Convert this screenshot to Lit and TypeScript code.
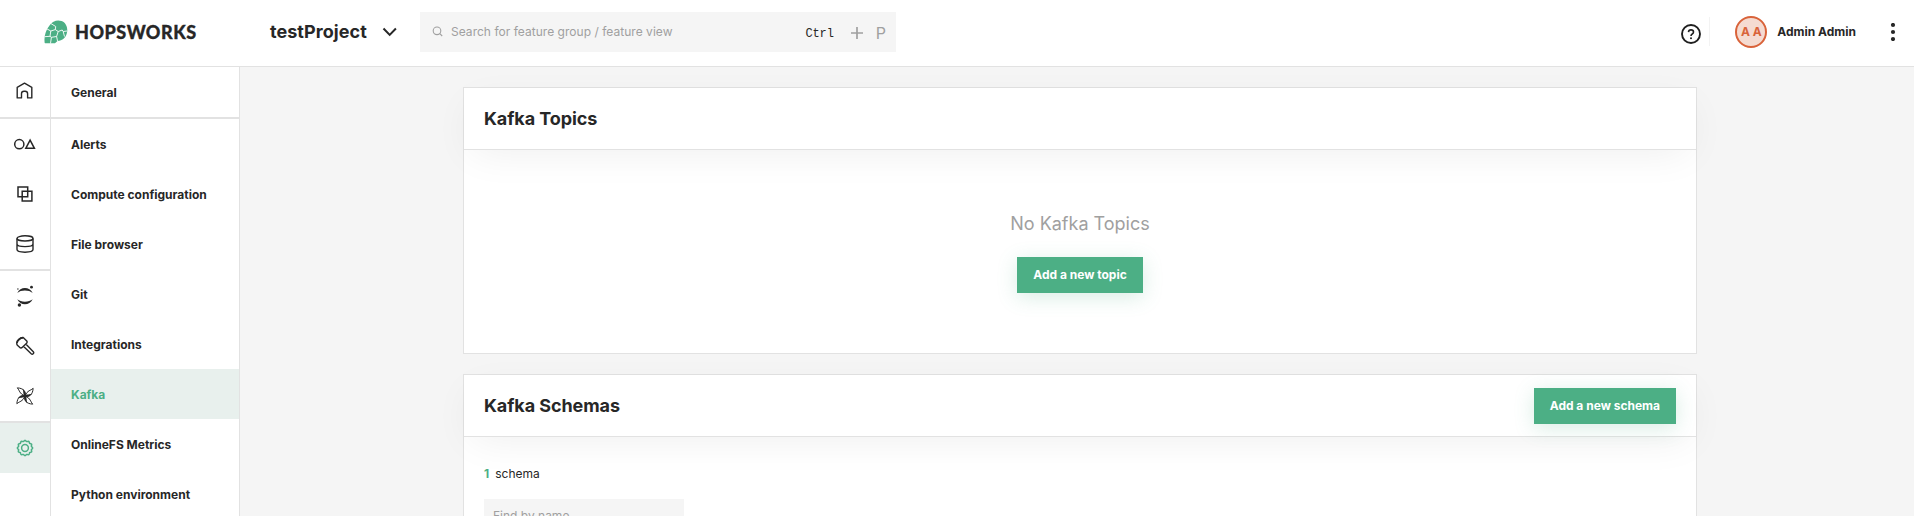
import { LitElement, html, css, svg } from "lit";
import { customElement, property } from "lit/decorators.js";
import { classMap } from "lit/directives/class-map.js";

const scallop = (() => {
  const pts: string[] = [];
  for (let i = 0; i <= 96; i++) {
    const a = (i / 96) * Math.PI * 2;
    const r = 7.1 + 0.5 * Math.cos(a * 12);
    pts.push(`${(9 + r * Math.cos(a)).toFixed(2)} ${(9 + r * Math.sin(a)).toFixed(2)}`);
  }
  return "M" + pts.join("L") + "Z";
})();

const blade = (deg: number) => svg`<g transform=${`rotate(${deg} 9 9)`}><path d="M9 9C10.500 5 7.500 1 1.200.9 3.800 3.200 3 6.600 9 9Z"/><path d="M9 9C10.300 6 9 3.400 6.400 2 8 4.600 6.400 6.800 9 9Z" fill="currentColor" stroke="none"/></g>`;

const icons: Record<string, unknown> = {
  home: svg`<svg width="18" height="18" viewBox="0 0 18 18" fill="none" stroke="currentColor" stroke-width="1.4" stroke-linejoin="round"><path d="M1.2 15.9V5.3L8.5 1.2l7.3 4.1v10.6h-4.2v-4.2q0-2.5-2.5-2.5H8q-2.5 0-2.5 2.5v4.2Z"/></svg>`,
  shapes: svg`<svg width="24" height="12" viewBox="0 0 24 12" fill="none" stroke="currentColor" stroke-width="1.5"><circle cx="6.3" cy="6.2" r="4.6"/><path d="M17.1 2.2 21.4 10.3H12.8Z"/></svg>`,
  compute: svg`<svg width="18" height="18" viewBox="0 0 18 18" fill="none" stroke="currentColor" stroke-width="1.5"><path d="M2 2h9.7v9.7H2zM6.2 6.2h9.7v9.7H6.2z"/></svg>`,
  data: svg`<svg width="18" height="18" viewBox="0 0 18 18" fill="none" stroke="currentColor" stroke-width="1.4"><ellipse cx="9" cy="3.4" rx="8" ry="2.6"/><path d="M1 3.4v11.2c0 1.5 3.6 2.6 8 2.6s8-1.1 8-2.6V3.4M1 9c0 1.5 3.6 2.6 8 2.6s8-1.1 8-2.6"/></svg>`,
  jupyter: svg`<svg width="18" height="22" viewBox="0 0 18 22" fill="currentColor"><path d="M1.3 8C3 4.600 5.700 3 8.900 3S15 4.600 16.700 8C14.700 6.300 12 5.500 8.900 5.500S3.200 6.300 1.300 8ZM1.300 14.300C3.200 15.900 5.800 16.700 8.900 16.700s5.800-.8 7.800-2.400C15 17.700 12.200 19.300 8.900 19.300S3 17.700 1.300 14.300Z"/><circle cx="15.500" cy="2.200" r="1.400"/><circle cx="1.900" cy="4" r=".7"/><circle cx="3.400" cy="20" r="1.700"/></svg>`,
  hammer: svg`<svg width="20" height="20" viewBox="0 0 20 20" fill="none" stroke="currentColor" stroke-width="1.400" stroke-linejoin="round"><path d="M1.800 6.800Q2 4.500 3.800 3.300 5.500 1.500 8.200 1.500L12 5.300Q12.300 6.600 11.600 7.200L7.400 11.300Q6.600 12.100 5.400 11.900L2.400 9.200Q1.600 8.300 1.800 6.800ZM10.800 8l7.500 7.700q.9 1.100-.1 2t-2 0L8.400 10.300"/><path d="M2 7Q2.200 5 4 3.600 5.700 1.900 8 1.700" stroke-width="1.800"/></svg>`,
  pinwheel: svg`<svg width="18" height="18" viewBox="0 0 18 18" fill="none" stroke="currentColor" stroke-width="1" stroke-linejoin="round">${[0, 90, 180, 270].map(blade)}<circle cx="9" cy="9" r="1.900" fill="currentColor" stroke="none"/></svg>`,
  settings: svg`<svg width="18" height="18" viewBox="0 0 18 18" fill="none" stroke="currentColor" stroke-width="1.500"><path d="${scallop}"/><circle cx="9" cy="9" r="3.400"/></svg>`,
};

@customElement("hw-header")
export class HwHeader extends LitElement {
  static styles = css`
    :host { display: flex; align-items: center; height: 66px; border-bottom: 1px solid #e2e2e2; background: #fff; }
    svg { display: block; flex: none; }
    .logo { display: flex; align-items: center; gap: 7px; padding-left: 44px; width: 270px; box-sizing: border-box; margin-bottom: 3px; }
    .word { font: 900 18px/24px Lato, sans-serif; letter-spacing: 0.5px; color: #272727; -webkit-text-stroke: 0.3px #272727; }
    .project { display: flex; align-items: center; justify-content: space-between; width: 127px; margin-bottom: 3px; font-size: 18px; font-weight: 700; letter-spacing: 0.05px; }
    .search { display: flex; align-items: center; width: 476px; height: 40px; margin: 0 0 3px 23px; padding: 0 10px 0 12px; box-sizing: border-box; background: #f5f5f5; color: #a0a0a0; font-size: 12px; }
    .hint { flex: 1; padding-left: 8px; letter-spacing: 0.03px; }
    kbd { font: 12px/16px "Liberation Mono", monospace; color: #272727; letter-spacing: -0.1px; margin: 4px 17px 0 0; }
    .plus { margin: 3px 13px 0 0; }
    .key { font-size: 16px; padding-top: 2px; }
    .right { display: flex; align-items: center; margin: 0 18px 3px auto; }
    .sep { width: 1px; height: 29px; margin: 0 25px 0 8px; background: #f3f3f3; }
    .help { margin-top: 4px; }
    .avatar { display: grid; place-items: center; width: 32px; height: 32px; box-sizing: border-box; border: 2px solid #d9633a; border-radius: 50%; background: #f5dbd1; color: #d9633a; font-size: 12px; font-weight: 700; }
    .user { margin: 0 34px 0 10px; font-size: 12px; font-weight: 700; }
  `;
  render() {
    return html`
      <div class="logo">
        <svg width="24" height="24" viewBox="0 0 24 24">
          <path fill="#4caf85" d="M5.500 5.500C8.500 1 13.200-.5 17.500 1c4.200 1.500 6.400 6 5.600 11C22.200 17.500 18.500 21 13.500 21L11 23.300H1.200Q.5 23.300.6 22C0 16.500 1.500 10.500 5.500 5.500Z"/>
          <path fill="none" stroke="#fff" stroke-width="0.900" stroke-linejoin="round" d="M7 3.600 11.700 6.500 11.300 9.600 6.800 11 2.800 8.800M11.300 9.600 14.200 11.500 18.200 10 19.200 11.500 23 11M19.200 11.500 20.500 16.500M14.200 11.500 12.600 16.500 13.500 21M12.600 16.500 7.400 17.300 6 16.300 6.800 11M6 16.300.6 16.700M7.400 17.300 6.500 23.500"/>
        </svg>
        <span class="word">HOPSWORKS</span>
      </div>
      <div class="project">
        <span>testProject</span>
        <svg width="15" height="10" viewBox="0 0 15 10" fill="none" stroke="#272727" stroke-width="2"><path d="M1.500 1.500 7.700 7.900 13.900 1.500"/></svg>
      </div>
      <div class="search">
        <svg width="11" height="11" viewBox="0 0 11 11" fill="none" stroke="#a0a0a0" stroke-width="1.100"><circle cx="5" cy="4.800" r="3.800"/><path d="M7.800 7.600 10.200 10"/></svg>
        <span class="hint">Search for feature group / feature view</span>
        <kbd>Ctrl</kbd>
        <svg class="plus" width="12" height="12" viewBox="0 0 12 12" stroke="#a0a0a0" stroke-width="1.700"><path d="M6 0v12M0 6h12"/></svg>
        <span class="key">P</span>
      </div>
      <div class="right">
        <svg class="help" width="20" height="20" viewBox="0 0 20 20" fill="none" stroke="#1f1f1f" stroke-width="1.900"><circle cx="10" cy="10" r="9"/><path d="M7.500 8.100Q7.600 5.900 10 5.900t2.500 2.100q0 1.200-1.300 2Q10 10.700 10 12.100" stroke-width="1.600"/><circle cx="10" cy="14.300" r="1" fill="#1f1f1f" stroke="none"/></svg>
        <span class="sep"></span>
        <span class="avatar">A A</span>
        <span class="user">Admin Admin</span>
        <svg width="6" height="18" viewBox="0 0 6 18" fill="#272727"><circle cx="3" cy="2" r="2.100"/><circle cx="3" cy="9" r="2.100"/><circle cx="3" cy="16" r="2.100"/></svg>
      </div>
    `;
  }
}

@customElement("hw-rail")
export class HwRail extends LitElement {
  static styles = css`
    :host { display: block; width: 50px; border-right: 1px solid #e2e2e2; background: #fff; color: #272727; }
    .item { display: grid; place-items: center; height: 50px; }
    .item svg { display: block; }
    .line { border-top: 2px solid #e2e2e2; }
    .active { background: #e8f0ed; color: #4caf85; }
    .home { padding: 0 1px 2px 0; height: 48px; }
  `;
  render() {
    const names = ["home", "shapes", "compute", "data", "jupyter", "hammer", "pinwheel", "settings"];
    return names.map((n) => html`<div class=${classMap({ item: true, home: n === "home", line: ["shapes", "jupyter", "settings"].includes(n), active: n === "settings" })}>${icons[n]}</div>`);
  }
}

@customElement("hw-menu")
export class HwMenu extends LitElement {
  static styles = css`
    :host { display: block; width: 188px; border-right: 1px solid #e2e2e2; background: #fff; }
    .item { height: 50px; padding-left: 20px; font-size: 12px; font-weight: 700; line-height: 51px; }
    .first { border-bottom: 2px solid #e2e2e2; }
    .active { background: #e8f0ed; color: #4caf85; }
  `;
  render() {
    const names = ["General", "Alerts", "Compute configuration", "File browser", "Git", "Integrations", "Kafka", "OnlineFS Metrics", "Python environment"];
    return names.map((n) => html`<div class=${classMap({ item: true, first: n === "General", active: n === "Kafka" })}>${n}</div>`);
  }
}

@customElement("hw-button")
export class HwButton extends LitElement {
  static styles = css`
    button { display: block; height: 36px; padding: 0 16px; border: 0; background: #4caf85; color: #fff; font: 700 12px/36px Inter, sans-serif; box-shadow: 0 4px 20px rgba(76, 175, 133, 0.22); }
  `;
  render() {
    return html`<button><slot></slot></button>`;
  }
}

@customElement("hw-card")
export class HwCard extends LitElement {
  @property() heading = "";
  static styles = css`
    :host { display: block; border: 1px solid #e2e2e2; background: #fff; }
    .head { display: flex; align-items: center; justify-content: space-between; height: 61px; padding: 0 20px; border-bottom: 1px solid #e2e2e2; background: #fff; box-shadow: 0 10px 40px -8px rgba(0, 0, 0, 0.07); }
    .title { font-size: 18px; font-weight: 700; letter-spacing: -0.08px; }
  `;
  render() {
    return html`<div class="head"><span class="title">${this.heading}</span><slot name="action"></slot></div><slot></slot>`;
  }
}

@customElement("app-root")
export class AppRoot extends LitElement {
  static styles = css`
    :host { display: flex; flex-direction: column; height: 516px; overflow: hidden; background: #f5f5f5; color: #272727; font-family: Inter, sans-serif; }
    hw-header { flex: none; }
    .body { display: flex; flex: 1; min-height: 0; }
    .main { flex: 1; display: flex; flex-direction: column; align-items: center; gap: 20px; padding: 20px 0 0 6px; overflow: hidden; }
    hw-card { width: 1232px; flex: none; }
    .empty { display: flex; flex-direction: column; align-items: center; gap: 22px; height: 140px; padding-top: 63px; font-size: 18px; line-height: 22px; color: #a0a0a0; }
    .list { height: 240px; padding: 30px 20px; font-size: 12px; line-height: 14px; }
    .count { color: #4caf85; font-weight: 700; margin-right: 6px; }
    .field { width: 200px; height: 34px; margin-top: 18px; padding: 0 9px; box-sizing: border-box; background: #f5f5f5; color: #a0a0a0; line-height: 34px; }
  `;
  render() {
    return html`
      <hw-header></hw-header>
      <div class="body">
        <hw-rail></hw-rail>
        <hw-menu></hw-menu>
        <div class="main">
          <hw-card heading="Kafka Topics">
            <div class="empty">
              <span>No Kafka Topics</span>
              <hw-button>Add a new topic</hw-button>
            </div>
          </hw-card>
          <hw-card heading="Kafka Schemas">
            <hw-button slot="action">Add a new schema</hw-button>
            <div class="list">
              <div><span class="count">1</span>schema</div>
              <div class="field">Find by name...</div>
            </div>
          </hw-card>
        </div>
      </div>
    `;
  }
}
